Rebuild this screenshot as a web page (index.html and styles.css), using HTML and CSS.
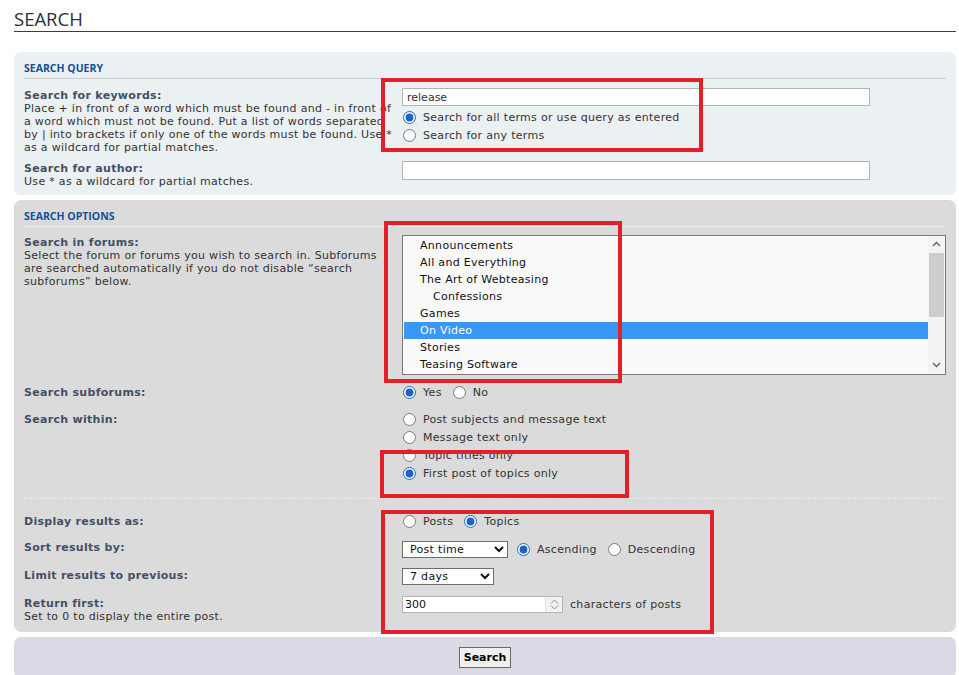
FILE: index.html
```html
<!DOCTYPE html>
<html lang="en">
<head>
    <meta charset="UTF-8">
    <meta name="viewport" content="width=device-width, initial-scale=1.0">
    <title>Search</title>
    <link rel="stylesheet" href="styles.css">
</head>
<body>
    <div class="page">
        <h2 class="page-title">SEARCH</h2>

        <form class="search-form" action="#" method="get">
            <div class="panel panel-query">
                <h3>Search query</h3>
                <dl class="first">
                    <dt>
                        <label for="keywords">Search for keywords:</label>
                        <span>Place + in front of a word which must be found and - in front of a word which must not be found. Put a list of words separated by | into brackets if only one of the words must be found. Use * as a wildcard for partial matches.</span>
                    </dt>
                    <dd>
                        <input type="text" class="inputbox" id="keywords" name="keywords" value="release">
                        <label class="radio-row"><input type="radio" name="terms" value="all" checked>Search for all terms or use query as entered</label>
                        <label class="radio-row"><input type="radio" name="terms" value="any">Search for any terms</label>
                    </dd>
                </dl>
                <dl class="author">
                    <dt>
                        <label for="author">Search for author:</label>
                        <span>Use * as a wildcard for partial matches.</span>
                    </dt>
                    <dd><input type="text" class="inputbox" id="author" name="author" value=""></dd>
                </dl>
            </div>

            <div class="panel panel-options">
                <h3>Search options</h3>
                <dl class="first forums">
                    <dt>
                        <label>Search in forums:</label>
                        <span>Select the forum or forums you wish to search in. Subforums are searched automatically if you do not disable &ldquo;search subforums&rdquo; below.</span>
                    </dt>
                    <dd>
                        <div class="forum-list">
                            <ul>
                                <li>Announcements</li>
                                <li>All and Everything</li>
                                <li>The Art of Webteasing</li>
                                <li class="sub">Confessions</li>
                                <li>Games</li>
                                <li class="selected">On Video</li>
                                <li>Stories</li>
                                <li>Teasing Software</li>
                            </ul>
                            <div class="scrollbar">
                                <span class="arrow"><svg width="9" height="6" viewBox="0 0 9 6"><polyline points="1,5 4.5,1.5 8,5" fill="none" stroke="#606060" stroke-width="1.4"/></svg></span>
                                <span class="track"><span class="thumb"></span></span>
                                <span class="arrow down"><svg width="9" height="6" viewBox="0 0 9 6"><polyline points="1,1 4.5,4.5 8,1" fill="none" stroke="#606060" stroke-width="1.4"/></svg></span>
                            </div>
                        </div>
                    </dd>
                </dl>
                <dl>
                    <dt><label>Search subforums:</label></dt>
                    <dd class="radios inline">
                        <label class="radio-row"><input type="radio" name="sc" value="1" checked>Yes</label>
                        <label class="radio-row"><input type="radio" name="sc" value="0">No</label>
                    </dd>
                </dl>
                <dl class="within">
                    <dt><label>Search within:</label></dt>
                    <dd class="radios">
                        <label class="radio-row"><input type="radio" name="sf" value="all">Post subjects and message text</label>
                        <label class="radio-row"><input type="radio" name="sf" value="msgonly">Message text only</label>
                        <label class="radio-row"><input type="radio" name="sf" value="titleonly">Topic titles only</label>
                        <label class="radio-row"><input type="radio" name="sf" value="firstpost" checked>First post of topics only</label>
                    </dd>
                </dl>

                <hr class="dashed">

                <dl>
                    <dt><label>Display results as:</label></dt>
                    <dd class="radios inline">
                        <label class="radio-row"><input type="radio" name="sr" value="posts">Posts</label>
                        <label class="radio-row"><input type="radio" name="sr" value="topics" checked>Topics</label>
                    </dd>
                </dl>
                <dl>
                    <dt><label>Sort results by:</label></dt>
                    <dd class="inline">
                        <select class="sort-key" name="sk">
                            <option>Author</option>
                            <option selected>Post time</option>
                            <option>Forum</option>
                            <option>Topic title</option>
                            <option>Post subject</option>
                        </select>
                        <label class="radio-row"><input type="radio" name="sd" value="a" checked>Ascending</label>
                        <label class="radio-row"><input type="radio" name="sd" value="d">Descending</label>
                    </dd>
                </dl>
                <dl>
                    <dt><label>Limit results to previous:</label></dt>
                    <dd class="inline">
                        <select class="limit" name="st">
                            <option>All results</option>
                            <option>1 day</option>
                            <option selected>7 days</option>
                            <option>2 weeks</option>
                            <option>1 month</option>
                        </select>
                    </dd>
                </dl>
                <dl class="return">
                    <dt>
                        <label>Return first:</label>
                        <span>Set to 0 to display the entire post.</span>
                    </dt>
                    <dd class="inline">
                        <span class="number">
                            <input type="text" name="ch" value="300">
                            <span class="spin">
                                <svg width="9" height="5" viewBox="0 0 9 5"><polyline points="1,4.5 4.5,1 8,4.5" fill="none" stroke="#8a8a8a" stroke-width="1"/></svg>
                                <svg width="9" height="5" viewBox="0 0 9 5"><polyline points="1,0.5 4.5,4 8,0.5" fill="none" stroke="#8a8a8a" stroke-width="1"/></svg>
                            </span>
                        </span>
                        <span class="after">characters of posts</span>
                    </dd>
                </dl>
            </div>

            <div class="panel panel-submit">
                <input type="submit" class="button1" value="Search">
            </div>
        </form>
    </div>

    <!-- review marks drawn over the form -->
    <div class="mark mark-query"></div>
    <div class="mark mark-forums"></div>
    <div class="mark mark-within"></div>
    <div class="mark mark-display"></div>
</body>
</html>
```

FILE: styles.css
```css
* { box-sizing: border-box; }
body {
    margin: 0; position: relative; background: #fff;
    font-family: "DejaVu Sans", Verdana, sans-serif; font-size: 11px; letter-spacing: 0.3px; color: #333;
}
.page { padding: 0 3px 0 14px; }

.page-title {
    margin: 0 0 20px; padding-top: 7px; letter-spacing: 0;
    font: 400 18.5px/24px "Open Sans", sans-serif; color: #28313f;
    border-bottom: 1px solid #6f2633;
}

.search-form { margin: 0; }
.panel { border-radius: 7px; padding: 10px 10px 7px; margin-bottom: 5px; }
.panel-query { background: #ebf0f2; }
.panel-options { background: #dbdbdb; padding-bottom: 9px; }
.panel-submit { background: #dcd8e6; padding: 10px 10px 10px; text-align: center; margin-bottom: 0; }

.panel h3 {
    margin: 0; padding-bottom: 4px; letter-spacing: 0;
    font: 700 10.5px/12px "Open Sans", sans-serif; color: #115098;
    text-transform: uppercase; border-bottom: 1px solid #c9cfd3;
}
.panel-options h3 { border-bottom-color: #ececec; }

dl { display: flex; margin: 10px 0 0; }
dl.first { margin-top: 9px; }
dl.author { margin-top: 7px; }
dl.forums { margin-top: 8px; }
dl.within { margin-top: 11px; }
dl.return { margin-top: 11px; }
dt { flex: 0 0 40%; padding-top: 1px; line-height: 13px; }
dt label { display: block; font-weight: bold; color: #425067; }
dt span { display: block; }
dd { flex: 1; margin: 0 0 0 1%; line-height: 13px; }
dd.radios { margin-top: -2px; }
dd.inline { display: flex; align-items: center; align-self: flex-start; }

.inputbox {
    display: block; width: 468px; height: 18px; margin: 0 0 2px; padding: 0 4px;
    border: 1px solid #b4b4b4; background: #fff;
    font: 11px "DejaVu Sans", Verdana, sans-serif; color: #333;
}
.author .inputbox { height: 19px; }

.radio-row { display: flex; align-items: center; height: 18px; color: #333; }
.inline .radio-row { margin-right: 10px; }
.radio-row input {
    width: 13px; height: 13px; margin: 0 7px 0 1px;
    accent-color: #1b63c6;
}

/* forum picker */
.forum-list {
    display: flex; height: 140px; padding: 1px 0 1px 1px;
    border: 1px solid #7a7a7a; background: #fafafa;
}
.forum-list ul { flex: 1; margin: 0; padding: 0; list-style: none; }
.forum-list li { height: 17px; line-height: 17px; padding-left: 16px; color: #111; white-space: nowrap; }
.forum-list li.sub { padding-left: 29px; }
.forum-list li.selected { background: #3a97f6; color: #fff; }
.scrollbar { width: 17px; display: flex; flex-direction: column; background: #f3f3f3; }
.scrollbar .arrow { height: 16px; display: flex; justify-content: center; align-items: flex-start; padding-top: 4px; }
.scrollbar .arrow.down { align-items: flex-end; padding: 0 0 5px; }
.scrollbar .track { flex: 1; }
.scrollbar .thumb { display: block; height: 64px; margin: 0 1px; background: #cdcdcd; }

hr.dashed { border: 0; border-top: 1px dashed #ebebeb; margin: 16px 0 15px; }

select {
    height: 17px; padding: 0 0 0 3px; margin: 0 8px 0 0;
    border: 1px solid #6e6e6e; border-radius: 0; background: #fff;
    font: 11px "DejaVu Sans", Verdana, sans-serif; letter-spacing: 0.3px; color: #111;
}
select.sort-key { width: 106px; }
select.limit { width: 92px; }

.number {
    display: inline-flex; width: 161px; height: 17px;
    border: 1px solid #b4b4b4; background: #fff;
}
.number input {
    flex: 1; min-width: 0; border: 0; padding: 0 2px; background: transparent;
    font: 11px "DejaVu Sans", Verdana, sans-serif; color: #111;
}
.number .spin {
    width: 17px; display: flex; flex-direction: column; justify-content: center; align-items: center;
    gap: 1px; background: #f2f2f2; border-left: 1px solid #e2e2e2;
}
.after { margin-left: 7px; color: #333; }

.button1 {
    height: 21px; padding: 0 4px;
    border: 1px solid #6a6a6a; background: #efefef; border-radius: 0;
    font: bold 11px "DejaVu Sans", Verdana, sans-serif; color: #000;
}

.mark { position: absolute; border: 4px solid #e3202a; }
.mark-query { left: 381px; top: 78px; width: 322px; height: 74px; }
.mark-forums { left: 384px; top: 221px; width: 238px; height: 162px; }
.mark-within { left: 380px; top: 450px; width: 249px; height: 48px; }
.mark-display { left: 381px; top: 510px; width: 333px; height: 124px; }
```
